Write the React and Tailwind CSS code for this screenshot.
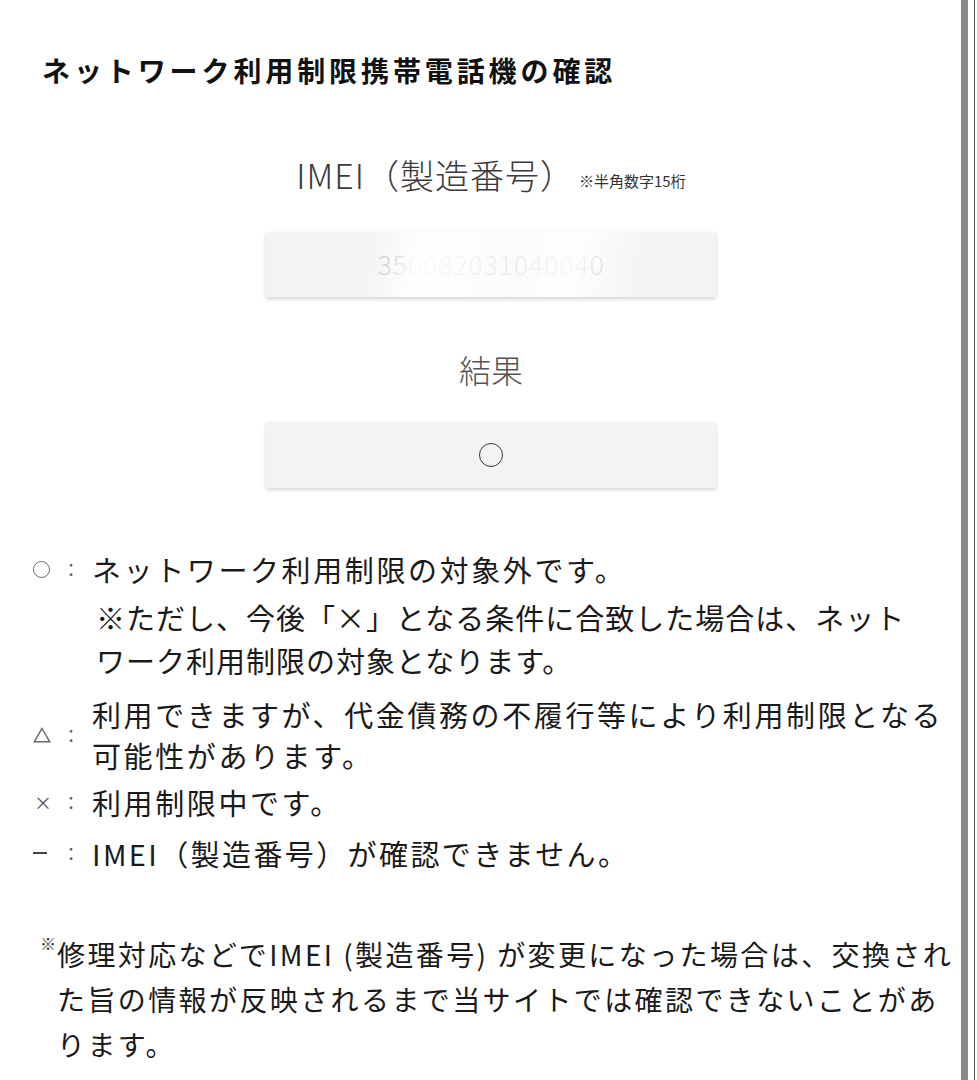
import React from 'react'

const jp = { fontFamily: '"Noto Sans CJK JP", "Noto Sans", sans-serif' }

const LegendRow = ({ mark, children, className = '', center = false }) => (
  <div className={`flex ${center ? 'items-center' : 'items-start'} ${className}`}>
    <div className="w-[29px] h-[42px] shrink-0 flex items-center text-[#555]">{mark}</div>
    <div className="w-[30px] h-[42px] shrink-0 flex items-center text-[18px] text-[#666]">：</div>
    <div className="flex-1">{children}</div>
  </div>
)

const App = () => {
  return (
    <div className="w-[977px] h-[1080px] bg-white overflow-hidden flex" style={jp}>
      {/* Page */}
      <div className="w-[961px] shrink-0">
        <h1 className="pt-[50px] pl-[42px] text-[28px] leading-[40px] font-bold tracking-[3.9px] text-[#111]">
          ネットワーク利用制限携帯電話機の確認
        </h1>

        <div className="flex flex-col items-center pl-[21px]">
          {/* IMEI label */}
          <div className="mt-[62px] flex items-end">
            <span className="text-[34px] leading-[46px] font-light tracking-[1px] text-[#3a3a3a]">IMEI（製造番号）</span>
            <span className="ml-[4px] mb-[8px] text-[15px] leading-[18px] text-[#333]">※半角数字15桁</span>
          </div>

          {/* IMEI input */}
          <div className="relative mt-[34px] w-[450px] h-[65px] bg-[#f3f3f3] shadow-[0_2px_4px_rgba(0,0,0,0.18)] flex items-center justify-center overflow-hidden">
            <span className="text-[27px] font-light tracking-[0.7px] text-[#b8b8b8]">350082031040040</span>
            <div className="absolute inset-0 bg-[linear-gradient(100deg,transparent_22%,rgba(255,255,255,0.95)_34%,rgba(255,255,255,0.7)_55%,rgba(255,255,255,0.9)_68%,transparent_85%)]" />
          </div>

          {/* Result */}
          <div className="mt-[50px] text-[32px] leading-[44px] font-light text-[#555]">結果</div>
          <div className="mt-[31px] w-[450px] h-[66px] bg-[#f3f3f3] shadow-[0_2px_4px_rgba(0,0,0,0.16)] flex items-center justify-center">
            <span className="block w-[24px] h-[24px] rounded-full border-[1.5px] border-[#333]" />
          </div>
        </div>

        {/* Legend */}
        <div className="mt-[60px] pl-[33px] pr-[10px] text-[#1a1a1a]">
          <LegendRow mark={<span className="block w-[17px] h-[17px] rounded-full border-[1.5px] border-[#666]" />}>
            <p className="text-[29px] leading-[42px] tracking-[2.6px]">ネットワーク利用制限の対象外です。</p>
            <p className="mt-[6px] pl-[4px] text-[29px] leading-[43px] tracking-[1px]">
              ※ただし、今後「×」となる条件に合致した場合は、ネット<br />
              ワーク利用制限の対象となります。
            </p>
          </LegendRow>

          <LegendRow
            center
            className="mt-[12px]"
            mark={
              <svg width="18" height="16" viewBox="0 0 18 16">
                <path d="M9 1.5 L16.8 14.8 L1.2 14.8 Z" fill="none" stroke="#666" strokeWidth="1.4" />
              </svg>
            }
          >
            <p className="text-[29px] leading-[41px] tracking-[2.6px]">
              利用できますが、代金債務の不履行等により利用制限となる<br />
              可能性があります。
            </p>
          </LegendRow>

          <LegendRow className="mt-[5px]" mark={<span className="text-[18px] leading-none pl-[1px]">×</span>}>
            <p className="text-[29px] leading-[42px] tracking-[2.6px]">利用制限中です。</p>
          </LegendRow>

          <LegendRow className="mt-[9px]" mark={<span className="block w-[14px] h-[2px] bg-[#444]" />}>
            <p className="text-[29px] leading-[42px] tracking-[2.4px]">IMEI（製造番号）が確認できません。</p>
          </LegendRow>
        </div>

        {/* Footnote */}
        <div className="mt-[58px] pl-[40px] flex text-[#1a1a1a]">
          <span className="w-[17px] shrink-0 text-[16px] leading-[22px] text-[#333]">※</span>
          <p className="text-[28px] leading-[45px] tracking-[2.4px]">
            修理対応などでIMEI (製造番号) が変更になった場合は、交換され<br />
            た旨の情報が反映されるまで当サイトでは確認できないことがあ<br />
            ります。
          </p>
        </div>
      </div>

      {/* Right edge */}
      <div className="w-[7px] shrink-0 bg-[#8a8a8a]" />
      <div className="w-[6px] shrink-0 bg-white" />
      <div className="w-[1px] shrink-0 bg-[#555]" />
      <div className="flex-1 bg-white" />
    </div>
  )
}

export default App
